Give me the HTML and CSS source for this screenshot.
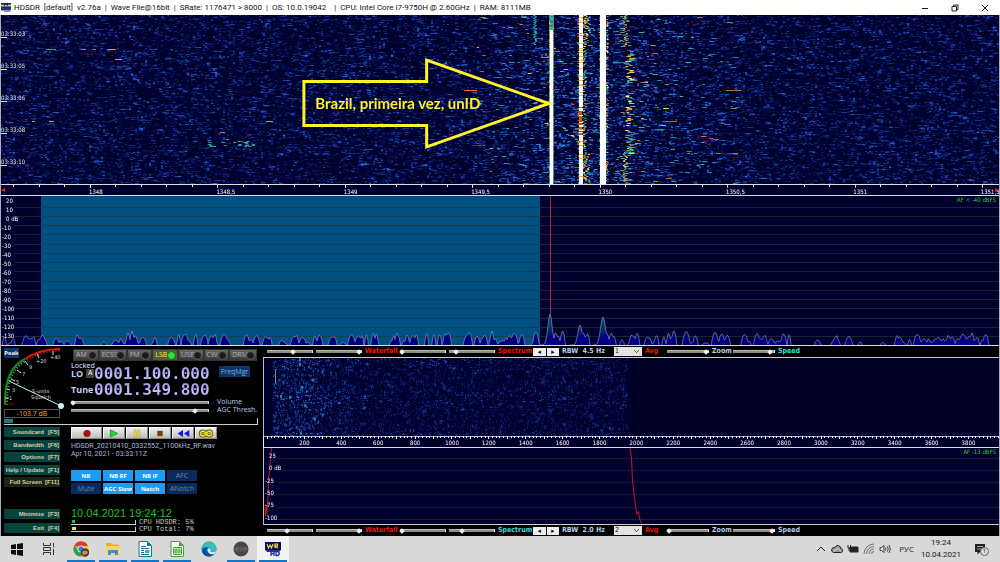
FILE: index.html
```html
<!DOCTYPE html>
<html lang="en">
<head>
<meta charset="utf-8">
<title>HDSDR</title>
<link rel="stylesheet" href="styles.css">
</head>
<body>
<header class="titlebar">
  <svg class="app-icon" viewBox="0 0 20 18"><rect width="20" height="12" fill="#141c6a"/><path d="M0 3h5l2 3 3-3 3 3 2-3h5v4H0z" fill="#d8d070"/><rect y="9" width="20" height="6" fill="#26307c"/><path d="M6 15h12v3H6z" fill="#8a90b8"/></svg>
  <h1 class="title">HDSDR&nbsp; [default]&nbsp; v2.76a&nbsp; |&nbsp; Wave File@16bit&nbsp; |&nbsp; SRate: 1176471 &gt; 8000&nbsp; |&nbsp; OS: 10.0.19042 &nbsp;&nbsp; |&nbsp; CPU: Intel Core i7-9750H @ 2.60GHz&nbsp; |&nbsp; RAM: 8111MB</h1>
  <div class="window-buttons">
    <button aria-label="Minimize window"><svg viewBox="0 0 8 8"><path d="M1 4.5h6"/></svg></button>
    <button aria-label="Restore window"><svg viewBox="0 0 8 8"><path d="M1 2.5h4.5v4.500H1zM2.500 2.500v-1.500H7v4.500H5.500"/></svg></button>
    <button aria-label="Close window"><svg viewBox="0 0 8 8"><path d="M1 1l6 6M7 1l-6 6"/></svg></button>
  </div>
</header>

<main class="receiver">
  <section class="rf-waterfall">
    <canvas id="rf-waterfall"></canvas>
    <ul class="timestamps"><li>03:33:03</li><li>03:33:05</li><li>03:33:06</li><li>03:33:08</li><li>03:33:10</li></ul>
    <svg class="callout" viewBox="0 0 1000 169" preserveAspectRatio="none">
      <path d="M303.500 66.500H426.500V45L549 88.500L426.500 132V110.500H303.500Z"/>
      <text x="315" y="94">Brazil, primeira vez, unID</text>
    </svg>
  </section>
  <section class="rf-ruler">
    <canvas id="rf-ticks"></canvas>
    <span class="edge edge-left">◂</span>
    <ol class="rf-labels"><li>1348</li><li>1348,5</li><li>1349</li><li>1349,5</li><li>1350</li><li>1350,5</li><li>1351</li><li>1351,5</li></ol>
    <span class="edge edge-right">▸</span>
  </section>
  <section class="rf-spectrum">
    <canvas id="rf-spectrum"></canvas>
    <ul class="db-scale"><li class="pos">20</li><li class="pos">10</li><li class="pos">0 dB</li><li>-10</li><li>-20</li><li>-30</li><li>-40</li><li>-50</li><li>-60</li><li>-70</li><li>-80</li><li>-90</li><li>-100</li><li>-110</li><li>-120</li><li>-130</li></ul>
    <span class="level">RF &lt; -40 dBFS</span>
  </section>

  <section class="console">
    <div class="panel">
      <div class="panel-top">
        <div class="meter">
          <button class="peak">Peak</button>
          <svg class="dial" viewBox="0 0 65 62">
            <path d="M5 60Q4 24 25 14" fill="none" stroke="#188a28" stroke-width="2"/>
            <path d="M25 14Q40 4 60 4" fill="none" stroke="#e01818" stroke-width="2"/>
            <path d="M7 60Q6 26 26 16" fill="none" stroke="#50c050" stroke-width="2" stroke-dasharray="1 2"/>
            <path d="M27 15Q42 6 60 6" fill="none" stroke="#c02020" stroke-width="2" stroke-dasharray="1 2"/>
            <path d="M5 53h4M7 44l3 1M11 34l4 2M17 25l4 3M25 16l3 4M37 9l2 4M53 6v4" stroke="#ddd"/>
            <path d="M5 59h10" stroke="#701010"/>
            <g class="dial-text"><text x="9" y="55">1</text><text x="12" y="47">3</text><text x="16" y="39">5</text><text x="22" y="31">7</text><text x="29" y="24">9</text><text x="36" y="18">+20</text><text x="50" y="14">+40</text><text x="32" y="48">S-units</text><text x="31" y="54">Squelch</text></g>
            <path d="M9 36L61 61" stroke="#bff4ff" stroke-width="1"/><circle cx="61" cy="61" r="3" fill="#c8f2ff"/>
          </svg>
          <output class="db-readout">-103.7 dB</output>
        </div>
        <div class="tuning">
          <div class="modes"><button>AM</button><button>ECSS</button><button>FM</button><button class="on">LSB</button><button>USB</button><button>CW</button><button>DRM</button></div>
          <div class="frequency">
            <div class="freq-rows">
              <span class="locked">Locked</span>
              <span class="freq-name">LO <button class="ab">A</button></span><output class="digits">0001.100.000</output>
              <span class="freq-name">Tune</span><output class="digits">0001.349.800</output>
            </div>
            <button class="freqmgr">FreqMgr</button>
          </div>
          <div class="audio">
            <input type="range" id="volume" min="0" max="100" value="0"><label for="volume">Volume</label>
            <input type="range" id="agc" min="0" max="100" value="92"><label for="agc">AGC Thresh.</label>
          </div>
        </div>
      </div>
      <div class="squelch"><i></i></div>
      <div class="panel-bottom">
        <nav class="menu">
          <div class="menu-main"><button>Soundcard<span>[F5]</span></button><button>Bandwidth<span>[F6]</span></button><button>Options<span>[F7]</span></button><button>Help / Update<span>[F1]</span></button><button class="dim">Full Screen<span>[F11]</span></button></div>
          <div class="menu-system"><button>Minimize<span>[F3]</span></button><button>Exit<span>[F4]</span></button></div>
        </nav>
        <div class="playback">
          <div class="transport">
            <button aria-label="Record"><svg viewBox="0 0 20 10"><circle cx="10" cy="5" r="4" fill="#a81018"/></svg></button>
            <button aria-label="Play"><svg viewBox="0 0 20 10"><path d="M6 1l8 4-8 4z" fill="#20d838" stroke="#149a28"/></svg></button>
            <button aria-label="Pause"><svg viewBox="0 0 20 10"><path d="M7 1h2v8H7zM11 1h2v8h-2z" fill="#f6e830" stroke="#a09020" stroke-width=".5"/></svg></button>
            <button aria-label="Stop"><svg viewBox="0 0 20 10"><path d="M7 2h6v6H7z" fill="#7a400c"/></svg></button>
            <button aria-label="Rewind"><svg viewBox="0 0 20 10"><path d="M10 1v8L4 5zM17 1v8l-6-4z" fill="#1018e0"/></svg></button>
            <button aria-label="Loop"><svg viewBox="0 0 20 10"><g fill="none" stroke="#504800" stroke-width="3.500"><circle cx="6.500" cy="5" r="2.700"/><circle cx="13.500" cy="5" r="2.700"/></g><g fill="none" stroke="#f0e020" stroke-width="1.800"><circle cx="6.500" cy="5" r="2.700"/><circle cx="13.500" cy="5" r="2.700"/></g></svg></button>
          </div>
          <p class="file">HDSDR_20210410_033255Z_1100kHz_RF.wav<br>Apr 10, 2021 - 03:33:11Z</p>
          <div class="dsp"><button class="on">NR</button><button class="on">NB RF</button><button class="on">NB IF</button><button>AFC</button><button>Mute</button><button class="on">AGC Slow</button><button class="on">Notch</button><button>ANotch</button></div>
          <div class="status">
            <time class="clock">10.04.2021 19:24:12</time>
            <div class="cpu"><i class="bar green"></i><span>CPU HDSDR: 5%</span><i class="bar yellow"></i><span>CPU Total: 7%</span></div>
          </div>
        </div>
      </div>
    </div>

    <div class="audio-view">
      <div class="controls">
        <input type="range" aria-label="Waterfall low" value="58"><input type="range" aria-label="Waterfall high" value="100"><span class="red">Waterfall</span>
        <input type="range" aria-label="Spectrum low" value="0"><input type="range" aria-label="Spectrum high" value="12"><span class="red">Spectrum</span>
        <span class="spin"><button aria-label="Decrease RBW">◂</button><button aria-label="Increase RBW">▸</button></span>
        <span>RBW&nbsp; 4.5 Hz</span>
        <select id="avg-rf" aria-label="RF averaging"><option>1</option></select><label class="red" for="avg-rf">Avg</label>
        <input type="range" id="zoom-rf" value="100"><label for="zoom-rf">Zoom</label>
        <input type="range" id="speed-rf" value="95"><label class="cyan" for="speed-rf">Speed</label>
      </div>
      <div class="af-waterfall"><canvas id="af-waterfall"></canvas></div>
      <div class="af-ruler"><canvas id="af-ticks"></canvas>
        <ol class="af-labels"><li>200</li><li>400</li><li>600</li><li>800</li><li>1000</li><li>1200</li><li>1400</li><li>1600</li><li>1800</li><li>2000</li><li>2200</li><li>2400</li><li>2600</li><li>2800</li><li>3000</li><li>3200</li><li>3400</li><li>3600</li><li>3800</li></ol></div>
      <div class="af-spectrum"><canvas id="af-spectrum"></canvas>
        <ul class="db-scale"><li class="pos">25</li><li class="pos">0 dB</li><li>-25</li><li>-50</li><li>-75</li><li>-100</li></ul>
        <span class="level">AF -13 dBFS</span></div>
      <div class="controls">
        <input type="range" aria-label="Audio waterfall low" value="45"><input type="range" aria-label="Audio waterfall high" value="100"><span class="red">Waterfall</span>
        <input type="range" aria-label="Audio spectrum low" value="0"><input type="range" aria-label="Audio spectrum high" value="27"><span class="cyan">Spectrum</span>
        <span class="spin"><button aria-label="Decrease audio RBW">◂</button><button aria-label="Increase audio RBW">▸</button></span>
        <span>RBW&nbsp; 2.0 Hz</span>
        <select id="avg-af" aria-label="Audio averaging"><option>2</option></select><label class="red" for="avg-af">Avg</label>
        <input type="range" id="zoom-af" value="0"><label for="zoom-af">Zoom</label>
        <input type="range" id="speed-af" value="100"><label for="speed-af">Speed</label>
      </div>
    </div>
  </section>
</main>

<footer class="taskbar">
  <div class="tasks">
    <button aria-label="Start"><svg viewBox="0 0 16 16"><path d="M2 4l5-1v5H2zM8 3l6-1v6H8zM2 9h5v5l-5-1zM8 9h6v6l-6-1z" fill="#111"/></svg></button>
    <button aria-label="Task view"><svg viewBox="0 0 16 16" fill="none" stroke="#333"><path d="M2.500 2v2.500h7V2M2.500 14v-2.500h7V14M2.500 6.500h7v3h-7zM12.500 2v3M12.500 8v6M12 6h1.500"/></svg></button>
    <button class="run" aria-label="Chrome"><svg viewBox="0 0 16 16"><circle cx="8" cy="8" r="7.500" fill="#fbc02d"/><path d="M8 8L1.500 4.200A7.500 7.500 0 0 1 15 5H8z" fill="#dc3c30"/><path d="M1.500 4.200A7.500 7.500 0 0 0 8 15.500L11 9 5 9z" fill="#2f9e50"/><circle cx="8" cy="8" r="3.500" fill="#fff"/><circle cx="8" cy="8" r="2.700" fill="#3b78e0"/><circle cx="12" cy="11.500" r="4.300" fill="#59382c"/><path d="M9 11q3-3 6 0l-1 2-4 1z" fill="#b98c76"/></svg></button>
    <button class="run" aria-label="File Explorer"><svg viewBox="0 0 16 16"><path d="M1 2h5l1 1.500h7V12H1z" fill="#e9a92c"/><path d="M1 5h14v9H1z" fill="#fad46c"/><path d="M3 14V9h10v5h-3v-2H6v2z" fill="#3d8fd6"/></svg></button>
    <button class="run" aria-label="Writer"><svg viewBox="0 0 16 16"><path d="M2 .5h8.500l4 4v11H2z" fill="#fff" stroke="#1473a8"/><path d="M10 .5v4.500h4.500z" fill="#1473a8"/><path d="M4 5.500h5M4 7.500h8M4 9.500h3M4 11.500h3M4 13.500h8" stroke="#1473a8"/><path d="M8 9h4.500v3H8z" fill="#50a5cf"/></svg></button>
    <button class="run" aria-label="Calc"><svg viewBox="0 0 16 16"><path d="M2 .5h8.500l4 4v11H2z" fill="#fff" stroke="#3ca52c"/><path d="M10 .5v4.500h4.500z" fill="#3ca52c"/><path d="M4.500 6.500h8v7h-8zM4.500 9h8M4.500 11h8M7 6.500v7M10 6.500v7" fill="none" stroke="#3ca52c"/></svg></button>
    <button aria-label="Edge"><svg viewBox="0 0 16 16"><circle cx="8" cy="8" r="7.500" fill="#1476c4"/><path d="M.6 7A7.500 7.500 0 0 1 15.500 7.500c0 4-5 4-6 2.500 1-2-1-4-3.500-4C3 6 1 7 .6 9z" fill="#38bfb8"/><path d="M1 10C2 7 4 6 6 6.500 4 10 7 14 13 13c-4 5-11 2-12-3z" fill="#0d509c"/><path d="M9 7.500c1.500 2-.5 2.500 1 3.300 2 .8 4 .3 5.500-1.300-.5 1.500-2 3.500-3 3.700-4 .7-7-2.700-5.500-6z" fill="#e2eef5"/></svg></button>
    <button class="run" aria-label="Recorder"><svg viewBox="0 0 16 16"><circle cx="8" cy="8" r="7.500" fill="#45454a"/><path d="M1 8h14M3 6v4M5 5v6M11 5v6M13 6v4" stroke="#77777c" stroke-width=".7"/><path d="M8 5v6" stroke="#b5503c" stroke-width=".7"/></svg></button>
    <button class="run active" aria-label="HDSDR"><svg viewBox="0 0 16 16"><rect y="1" width="16" height="8" fill="#0b0f55"/><path d="M2 3l1.500 4L5 4l1.500 3L8 3M10 7V3h2.500v2H10l3 2" fill="none" stroke="#e3d840" stroke-width="1.200"/><path d="M0 9h16l-2 2H2z" fill="#1a2cc0"/><path d="M6 10v5M9 10v5M6 12.500h3M11 10.500h2l1.500 2-1.500 2h-2z" fill="none" stroke="#252c8c" stroke-width="1.300"/></svg></button>
  </div>
  <div class="tray">
    <svg viewBox="0 0 12 12"><path d="M2 8l4-4 4 4"/></svg>
    <svg viewBox="0 0 12 12"><path d="M2.500 9.500h7a2 2 0 0 0 .3-4A3 3 0 0 0 4 4.500a2.600 2.600 0 0 0-1.500 5z" fill="#999"/><path d="M2 8.500l5-3 3 3" stroke="#eee" stroke-width=".7"/></svg>
    <svg viewBox="0 0 12 12"><path d="M3 4h8v5H3z" fill="#222"/><path d="M1 2v3h2.500V2M2 5v3"/></svg>
    <svg viewBox="0 0 12 12"><path d="M1 11A10 10 0 0 1 11 1M3.500 11A7.500 7.500 0 0 1 11 3.500M6 11a5 5 0 0 1 5-5M8.500 11A2.500 2.500 0 0 1 11 8.500" stroke="#555" stroke-width=".8"/></svg>
    <svg viewBox="0 0 12 12"><path d="M1 4.500h1.500L5 2.500v7L2.500 7.500H1zM6.500 4.500q1 1.500 0 3M8.300 3.300q1.800 2.700 0 5.400M10 2q2.600 4 0 8" stroke-width=".8"/></svg>
    <span class="lang">РУС</span>
    <div class="date"><time>19:24</time><time>10.04.2021</time></div>
    <span class="notice"><svg viewBox="0 0 12 12"><path d="M1 1h10v8H6l-2.500 2.500V9H1z" fill="#222"/><path d="M3 3.500h6M3 6h6" stroke="#ddd" stroke-width=".7"/></svg><b>1</b></span>
  </div>
</footer>
<script src="plots.js"></script>
</body>
</html>
```
FILE: styles.css
```css
* { box-sizing: border-box; }
body { margin: 0; min-height: 100vh; display: flex; flex-direction: column; overflow: hidden; background: #000; font: 7px/8px "Open Sans", "Noto Sans", sans-serif; color: #b9cfee; }
button, select, input { font: inherit; color: inherit; margin: 0; padding: 0; border: 0; background: none; }
ul, ol { list-style: none; margin: 0; padding: 0; }
p, h1 { margin: 0; }
canvas { position: absolute; inset: 0; width: 100%; height: 100%; }

.titlebar { height: 15px; display: flex; align-items: center; background: #fff; color: #111; }
.app-icon { width: 10px; height: 9px; margin: 0 3px 0 1px; }
.title { flex: 1; font: 400 8px/14px Roboto, sans-serif; white-space: nowrap; }
.window-buttons { display: flex; }
.window-buttons button { width: 30px; height: 15px; display: grid; place-items: center; }
.window-buttons svg { width: 8px; height: 8px; fill: none; stroke: #222; stroke-width: 1; }

.receiver { flex: 1; display: flex; flex-direction: column; border: solid #a8acb8; border-width: 0 1px; }
.rf-waterfall { flex: 169 1 0; position: relative; background: #00002e; overflow: hidden; }
.timestamps { position: absolute; inset: 0 auto 0 0; padding-top: 8px; color: #e8e8e8; font: 6px/22px "DejaVu Sans Condensed", "DejaVu Sans", sans-serif; }
.timestamps li { height: 32px; line-height: 22px; background: linear-gradient(#ddd, #ddd) 0 14px / 6px 1px no-repeat; }
.callout { position: absolute; inset: 0; width: 100%; height: 100%; }
.callout path { fill: none; stroke: #fff12a; stroke-width: 3; }
.callout text { fill: #ffee2c; font: 700 15px Lato, sans-serif; }

.rf-ruler { position: relative; height: 12px; border: solid #ddd; border-width: 1px 0; background: #00002e; color: #fff; }
.rf-labels { position: relative; display: flex; padding: 3px 0 0 88px; overflow: hidden; font: 6px/7px "DejaVu Sans Condensed", "DejaVu Sans", sans-serif; }
.rf-labels li { flex: 0 0 14%; width: 14%; }
.edge { position: absolute; top: 1px; color: #f01818; font: 8px/8px "DejaVu Sans", sans-serif; }
.edge-left { left: 0; }
.edge-right { right: 0; }

.rf-spectrum { flex: 149 1 0; position: relative; background: #00002e; }
.db-scale { position: relative; height: 100%; display: flex; flex-direction: column; padding: 0 0 4px 1px; color: #fff; font: 6px/8px "DejaVu Sans Condensed", "DejaVu Sans", sans-serif; }
.db-scale li { flex: 1; min-height: 0; display: flex; align-items: center; }
.db-scale .pos { padding-left: 4px; }
.level { position: absolute; top: 0; right: 3px; color: #2bd32b; font: 6px/7px "DejaVu Sans Condensed", "DejaVu Sans", sans-serif; }

.console { display: grid; grid-template-columns: 262px 1fr; min-height: 191px; border-top: 1px solid #ddd; background: #000; }
.panel { padding: 2px 5px 0 3px; display: flex; flex-direction: column; }
.panel-top { display: grid; grid-template-columns: 57px 1fr; column-gap: 10px; height: 70px; }
.meter { position: relative; display: flex; flex-direction: column; justify-content: space-between; }
.peak { position: relative; z-index: 1; width: 15px; height: 10px; background: #0c3672; color: #fff; font-weight: 700; font-size: 6px; }
.dial { position: absolute; left: -4px; top: -3px; width: 65px; height: 62px; overflow: visible; }
.dial-text { fill: #ddd; font: 5px "DejaVu Sans", sans-serif; }
.db-readout { width: 56px; height: 9px; border: 1px solid #555; color: #f0a838; text-align: center; line-height: 7px; }

.modes { display: flex; width: 184px; margin: 1px 0 0 2px; height: 12px; }
.modes button { flex: 1; display: flex; align-items: center; justify-content: space-between; padding: 0 1px 0 2px; border: 1px solid #333; background: linear-gradient(#666, #383838); color: #b5b5b5; font-size: 7px; white-space: nowrap; }
.modes button::after { content: ""; flex: none; width: 7px; height: 7px; border-radius: 50%; background: #1c1c1c; border: 1px solid #666; margin-left: -2px; }
.modes .on { color: #f6ee30; background: #5a5a40; }
.modes .on::after { background: #35e035; border-color: #1a6a1a; }
.frequency { display: flex; justify-content: space-between; padding: 3px 8px 0 0; }
.freq-rows { display: grid; grid-template-columns: 23px auto; grid-template-rows: 3px 13px 20px; align-items: center; }
.locked { grid-column: 1 / -1; font-size: 7px; font-weight: 600; line-height: 8px; }
.freq-name { display: flex; gap: 3px; font: 700 9px/10px "Open Sans", sans-serif; white-space: nowrap; }
.ab { width: 8px; height: 9px; background: #444; color: #fff; font: 7px/8px "Open Sans", sans-serif; }
.digits { font: 700 16px/16px "DejaVu Sans Mono", monospace; color: transparent; background: linear-gradient(#8f90dc, #c3c2fb 60%, #8584cc); background-clip: text; -webkit-background-clip: text; }
.freqmgr { width: 31px; height: 11px; margin-top: 2px; background: #0a3468; color: #86aade; }
.audio { display: grid; grid-template-columns: 138px auto; column-gap: 8px; grid-auto-rows: 8px; align-items: center; margin-top: -2px; }
.audio label { white-space: nowrap; }

input[type="range"] { -webkit-appearance: none; appearance: none; width: 100%; min-width: 0; height: 7px; }
input[type="range"]::-webkit-slider-runnable-track { height: 3px; background: #8a8a8a; border-top: 1px solid #bbb; border-right: 1px solid #eee; }
input[type="range"]::-webkit-slider-thumb { -webkit-appearance: none; width: 4px; height: 4px; margin-top: -1px; background: #eee; transform: rotate(45deg); }

.squelch { height: 7px; border: solid #ccc; border-width: 0 1px 1px 0; }
.squelch i { display: block; width: 9px; height: 4px; margin-top: 1px; background: #107f80; }

.panel-bottom { display: grid; grid-template-columns: 56px 138px; column-gap: 11px; flex: 1; padding: 2px 0 3px; }
.menu { display: flex; flex-direction: column; justify-content: space-between; }
.menu-main { display: flex; flex-direction: column; justify-content: space-between; height: 60px; }
.menu-system { display: flex; flex-direction: column; gap: 4px; }
.menu button { display: flex; justify-content: flex-end; gap: 3px; height: 10px; padding-right: 1px; align-items: center; background: #07433f; color: #d4cfac; font: 700 6px/8px "Liberation Sans", sans-serif; white-space: nowrap; }
.menu button span { min-width: 12px; text-align: right; }
.menu .dim { background: #1c2412; }
.playback { display: flex; flex-direction: column; }
.transport { display: grid; grid-template-columns: 31px repeat(5, 1fr); column-gap: 1px; }
.transport button { height: 12px; background: linear-gradient(#eee, #bcbcbc); border: 1px solid; border-color: #fff #888 #888 #fff; display: grid; place-items: center; }
.transport svg { width: 20px; height: 9px; }
.file { margin-top: 3px; white-space: nowrap; font: 7px/8px Roboto, sans-serif; color: #a9b9de; }
.dsp { display: grid; grid-template-columns: repeat(4, 30px); gap: 2px 2px; margin-top: 12px; }
.dsp button { height: 11px; background: #0a2a5c; color: #6a86ae; white-space: nowrap; }
.dsp .on { background: #1c9cf4; color: #fff; font-weight: 700; font-size: 6px; }
.status { margin-top: auto; }
.clock { display: block; color: #1fc020; font: 11px/12px "Liberation Sans", sans-serif; white-space: nowrap; }
.cpu { display: grid; grid-template-columns: 65px auto; column-gap: 3px; grid-auto-rows: 7px; align-items: center; font: 7px/7px "Liberation Mono", monospace; color: #ccc; }
.bar { height: 5px; border: solid #ccc; border-width: 0 1px 1px 0; }
.green { background: linear-gradient(#20c830, #20c830) 1px 0 / 3px 3px no-repeat; }
.yellow { background: linear-gradient(#f0e820, #f0e820) 1px 0 / 4px 3px no-repeat; }

.audio-view { display: flex; flex-direction: column; min-width: 0; }
.controls { display: grid; grid-template-columns: 46px 46px 32px 46px 46px 32px 26px 49px 28px 19px 42px 18px 42px auto; column-gap: 3px; align-items: center; height: 11px; padding-left: 4px; font: 700 7px/9px "DejaVu Sans Condensed", "DejaVu Sans", sans-serif; white-space: nowrap; color: #b9cfee; }
.controls .red { color: #f01414; }
.controls .cyan { color: #2fe5dc; }
.spin { display: grid; grid-template-columns: 1fr 1fr; gap: 1px; }
.spin button { height: 8px; background: #eee; color: #000; line-height: 8px; }
.controls select { height: 9px; background: #e4e4e4; color: #111; font-weight: 400; padding-left: 1px; appearance: none; background-image: linear-gradient(45deg, transparent 45%, #555 45% 60%, transparent 60%), linear-gradient(-45deg, transparent 45%, #555 45% 60%, transparent 60%); background-size: 3px 3px; background-position: 20px 3px, 22px 3px; background-repeat: no-repeat; }
.af-waterfall, .af-spectrum { position: relative; border-left: 1px solid #bbb; background: #00002e; }
.af-waterfall { flex: 77 1 0; border-top: 1px solid #ccc; }
.af-ruler { position: relative; height: 12px; border-left: 1px solid #eee; border-bottom: 1px solid #ddd; background: #00002e; color: #fff; }
.af-labels { position: relative; display: flex; padding: 3px 12px 0 22px; font: 6px/7px "DejaVu Sans Condensed", "DejaVu Sans", sans-serif; }
.af-labels li { flex: 1 1 0; min-width: 0; text-align: center; }
.af-spectrum { flex: 76 1 0; border-bottom: 1px solid #ccc; }
.af-spectrum .db-scale { padding-top: 2px; padding-bottom: 0; }

.taskbar { height: 26px; display: flex; justify-content: space-between; background: #d8d8d8; color: #222; }
.tasks { display: flex; padding-left: 1px; }
.tasks button { width: 32px; display: grid; place-items: center; border: solid transparent; border-width: 0 2px; }
.tasks button.run { background: linear-gradient(#1476c8, #1476c8) bottom / 100% 2px no-repeat; background-clip: padding-box; }
.tasks button.active { background-color: #f2f2f2; background-clip: border-box; }
.tasks svg { width: 16px; height: 16px; }
.tray { display: flex; align-items: center; gap: 4px; padding-right: 14px; }
.tray > svg { width: 12px; height: 12px; fill: none; stroke: #222; }
.lang { margin-left: 4px; font-size: 8px; }
.date { display: flex; flex-direction: column; align-items: center; width: 46px; font: 8px/12px Roboto, sans-serif; }
.notice { position: relative; margin-left: 6px; }
.notice svg { display: block; width: 12px; height: 12px; }
.notice b { position: absolute; left: 6px; top: 4px; width: 9px; height: 9px; border: 1px solid #666; border-radius: 50%; background: #ddd; font: 6px/7px "Open Sans", sans-serif; text-align: center; }
```
FILE: plots.js
```js
function rng(seed) {
  return function () {
    seed = (seed + 0x6D2B79F5) | 0;
    var t = Math.imul(seed ^ (seed >>> 15), 1 | seed);
    t = (t + Math.imul(t ^ (t >>> 7), 61 | t)) ^ t;
    return ((t ^ (t >>> 14)) >>> 0) / 4294967296;
  };
}
// Prepares a canvas whose drawing units are base pixels on both axes.
function open(id, bw, bh) {
  var c = document.getElementById(id);
  c.width = c.clientWidth;
  c.height = c.clientHeight;
  var g = c.getContext('2d');
  g.scale(c.width / bw, c.height / bh);
  return g;
}
var STOPS = [[0, 0, 0, 40], [0.3, 0, 2, 50], [0.5, 6, 20, 92], [0.75, 20, 54, 156], [1, 40, 100, 205], [1.25, 30, 140, 160], [1.5, 70, 200, 110], [1.75, 230, 80, 20], [2.1, 250, 220, 80], [2.5, 255, 255, 255]];
function colour(v) {
  for (var i = 1; i < STOPS.length; i++) {
    if (v < STOPS[i][0]) {
      var a = STOPS[i - 1], b = STOPS[i], f = (v - a[0]) / (b[0] - a[0]);
      return 'rgb(' + [1, 2, 3].map(function (k) { return Math.round(a[k] + (b[k] - a[k]) * f); }).join() + ')';
    }
  }
  return '#fff';
}
function waterfall(id, w, h, step, seed, gain) {
  var g = open(id, w, h), r = rng(seed), prev = [];
  for (var y = 0; y < h; y++) {
    var n = 0;
    for (var x = 0; x < w; x += step) {
      n = n * 0.4 + Math.pow(r(), 4) * 0.95;
      var i = x / step, v = n * 0.8 + (prev[i] || 0) * 0.28;
      prev[i] = v;
      g.fillStyle = colour(v * gain(x, y, r));
      g.fillRect(x, y, step, 1);
    }
  }
  return g;
}

function drawRfWaterfall() {
  var g = waterfall('rf-waterfall', 998, 169, 2, 7, function (x) {
    var d = Math.abs(x - 590);
    return 0.85 + 0.28 * Math.exp(-d * d / 8000);
  });
  var r = rng(31), i, y;
  function dash(x, y, w, v) { g.fillStyle = colour(v); g.fillRect(x, y, w, 1); }
  [[45, 34, 10, 1.4], [80, 34, 5, 1.8], [91, 34, 4, 1.75], [106, 34, 9, 1.9], [114, 44, 7, 1.9], [31, 106, 3, 1.5], [48, 106, 5, 1.9], [219, 117, 5, 1.8], [265, 106, 7, 1.5], [463, 75, 13, 1.8], [540, 42, 8, 1.8], [662, 106, 14, 1.75], [725, 75, 16, 1.7]].forEach(function (a) { dash(a[0], a[1], a[2], a[3]); });
  for (i = 0; i < 24; i++) dash(205 + r() * 48, 124 + r() * 8 | 0, 3, 1.25 + r() * 0.2);
  for (i = 0; i < 130; i++) dash(475 + r() * 125, r() * 169 | 0, 2 + r() * 4, 1.15 + Math.pow(r(), 3) * 0.9);
  for (i = 0; i < 110; i++) dash(615 + r() * 120, r() * 169 | 0, 2 + r() * 4, 1.15 + Math.pow(r(), 3) * 0.9);
  for (y = 0; y < 30; y++) dash(532 + r() * 2, y, 2, 1.1 + r() * 0.5);
  for (y = 0; y < 169; y++) {
    dash(548, y, 1, 1.1 + r()); dash(552, y, 1, 1 + r() * 0.9);
    if (y > 14) dash(549, y, 3, 2.6); else dash(549, y, 3, 1 + r() * 0.6);
    if (r() < 0.72) dash(576 + r() * 3, y, 2, 1.3 + r() * 0.6);
    if (r() < 0.65) dash(581 + r() * 3, y, 2, 1.2 + r());
    var weak = y > 90 && y < 120;
    if (!weak || r() < 0.4) dash(578, y, 4, r() < 0.85 ? 2.6 : 2); else dash(578, y, 3, 1.75);
    dash(598 + r(), y, 2, r() * 2.3); dash(604 + r() * 2, y, 2, r() * 2.3);
    dash(599, y, 6, 2.6);
    if (y < 32 || y > 138) {
      dash(582 + r() * 6, y, 2, 1.3 + r() * 0.9);
      dash(621 + r() * 4, y, 2, 1.2 + r() * 0.9);
      if (r() < 0.6) dash(613 + r() * 16, y, 3, 1.1 + r() * 0.6);
    } else if (r() < 0.6) dash(624 + r() * 6, y, 2 + r() * 4, 1.2 + r() * 1.1);
  }
  for (i = 0; i < 18; i++) if (r() < 0.8) dash(560 + i, 112 + i * 0.85 + r() * 3 | 0, 3, 1.1 + r());
  for (i = 0; i < 16; i++) if (r() < 0.8) dash(622 + i, 136 - i * 0.8 + r() * 3 | 0, 3, 1.1 + r());
}

function drawTicks(id, w, start, step, first, major) {
  var g = open(id, w, 11);
  g.fillStyle = '#fff';
  for (var x = start, i = 0; x < w; x += step, i++) g.fillRect(Math.round(x), 0, 1, i % major === first ? 3 : 2);
  return g;
}

function drawRfSpectrum() {
  var g = open('rf-spectrum', 998, 149), r = rng(98), x, i;
  g.fillStyle = '#005183';
  g.fillRect(40, 0, 499, 149);
  g.fillStyle = 'rgba(40,48,58,.7)';
  for (i = 0; i < 15; i++) g.fillRect(13, Math.round(10.500 + i * 9.270), 985, 1);
  var h = new Array(998).fill(-3);
  for (i = 0; i < 230; i++) {
    var c = r() * 998, big = Math.exp(-Math.pow((c - 590) / 170, 2));
    if (c > 800 && c < 900 && r() < 0.5) continue;
    var a = 2 + r() * (9 + big * 4), wd = 1.200 + r() * 1.800;
    for (x = Math.max(0, c - 9 | 0); x < Math.min(998, c + 9); x++) h[x] = Math.max(h[x], a * (1 - Math.pow((x - c) / wd, 2) / 2));
  }
  [[549, 31, 3], [579, 20, 3], [602, 28, 3.500], [127, 12, 2], [131, 14, 2], [213, 9, 2], [491, 14, 2], [962, 11, 4], [971, 12, 2]].forEach(function (p) {
    for (x = p[0] - 10; x < p[0] + 10; x++) h[x] = Math.max(h[x], p[1] * Math.exp(-Math.pow((x - p[0]) / p[2], 2)));
  });
  g.beginPath();
  g.moveTo(0, 150);
  for (x = 0; x < 998; x++) g.lineTo(x, 149 - h[x]);
  g.lineTo(998, 150);
  var f = g.createLinearGradient(0, 118, 0, 149);
  f.addColorStop(0, '#0a4a70'); f.addColorStop(0.5, '#052c70'); f.addColorStop(0.75, '#000080'); f.addColorStop(1, '#000080');
  g.fillStyle = f; g.fill();
  g.strokeStyle = '#98a2ae'; g.lineWidth = 0.6; g.stroke();
  g.fillStyle = '#b02028';
  g.fillRect(549, 0, 1, 118);
}

function drawAfWaterfall() {
  var g = waterfall('af-waterfall', 735, 76, 1, 55, function (x) {
    if (x < 9 || x > 363) return 0;
    return x < 60 ? 1.2 : x < 90 ? 1 : 0.82;
  });
  g.fillStyle = '#4aa878'; g.fillRect(11, 12, 1, 13);
  g.fillStyle = '#258090';
  [[35, 0], [35, 5], [37, 27], [48, 20], [40, 45], [25, 37], [16, 36], [50, 58], [36, 72]].forEach(function (p) { g.fillRect(p[0], p[1], 2, 3); });
}

function drawAfSpectrum() {
  var g = open('af-spectrum', 735, 76), i;
  g.fillStyle = '#20213c';
  for (i = 0; i < 6; i++) g.fillRect(12, Math.round(9.500 + i * 12.250), 723, 1);
  g.strokeStyle = '#c01820'; g.lineWidth = 1;
  function line(p) { g.beginPath(); p.forEach(function (q) { g.lineTo(q[0], q[1]); }); g.stroke(); }
  line([[7.500, 0], [6.500, 12], [5, 26], [4, 50], [3, 64], [2, 57], [1.500, 68], [1, 60]]);
  line([[366, 0], [367.500, 10], [368.500, 32], [370, 46], [372, 62], [373, 66], [374.500, 64], [376, 72], [378, 75]]);
}

function drawAll() {
  drawRfWaterfall();
  drawTicks('rf-ticks', 998, 12, 25.500, 3, 5);
  drawRfSpectrum();
  drawAfWaterfall();
  var g = drawTicks('af-ticks', 735, 3, 3.690, 0, 5);
  g.fillStyle = 'rgba(230,235,245,.75)';
  g.fillRect(0, 0, 735, 1);
  drawAfSpectrum();
}
drawAll();
window.addEventListener('resize', drawAll);
```
